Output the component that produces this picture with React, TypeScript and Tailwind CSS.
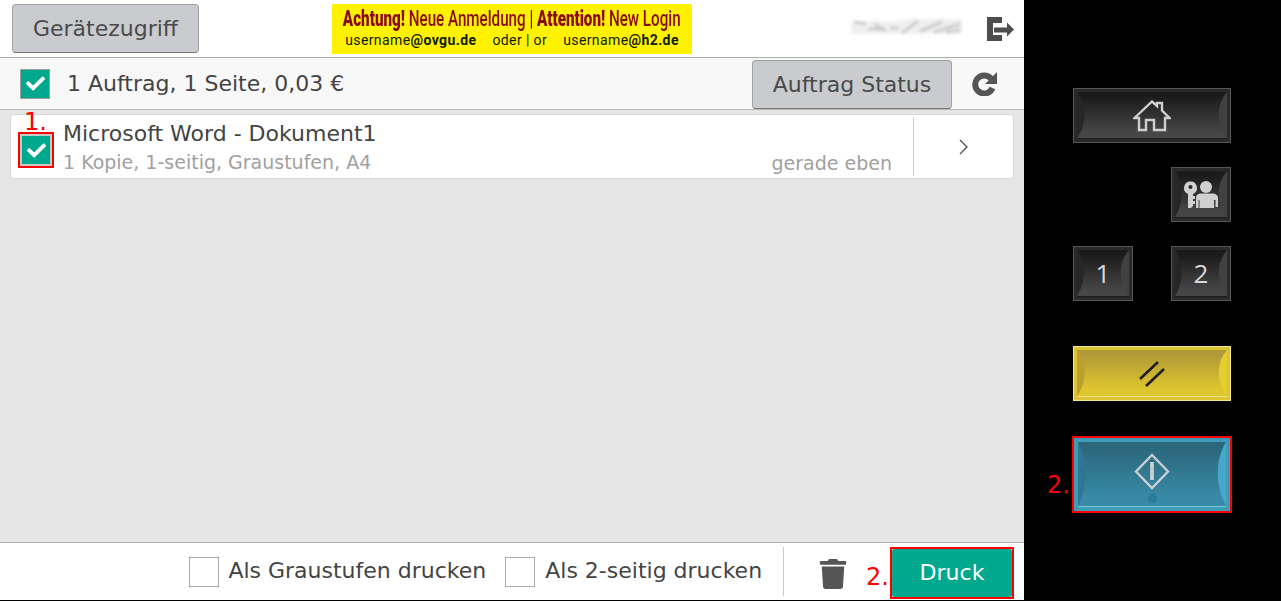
import React from "react";
import { FaCheck, FaTrash } from "react-icons/fa";

type KeyTheme = {
  border: string; bezel: string; top: string; bottom: string; left: string; right: string; lip: string;
};
const dark: KeyTheme = { border: "#575757", bezel: "#2a2a2a", top: "#1b1b1b", bottom: "#464646", left: "#262626", right: "#414141", lip: "#1e1e1e" };
const yellow: KeyTheme = { border: "#f4eb95", bezel: "#dcc433", top: "#b19a37", bottom: "#dfc62e", left: "#b99f30", right: "#e6cd30", lip: "#ece08a" };
const blue: KeyTheme = { border: "#3c9cb8", bezel: "#3f9db9", top: "#2b687d", bottom: "#398aa7", left: "#2f7790", right: "#46a8c8", lip: "#7cc3d2" };

function Key({ id, w, h, theme, className = "", children }: { id: string; w: number; h: number; theme: KeyTheme; className?: string; children?: React.ReactNode }) {
  return (
    <div className={`relative shrink-0 ${className}`} style={{ width: w, height: h }}>
      <svg width={w} height={h} viewBox={`0 0 ${w} ${h}`} className="absolute inset-0">
        <defs>
          <linearGradient id={id} x1="0" y1="0" x2="0" y2="1">
            <stop offset="0.1" stopColor={theme.top} />
            <stop offset="0.88" stopColor={theme.bottom} />
          </linearGradient>
        </defs>
        <rect x="0.5" y="0.5" width={w - 1} height={h - 1} fill={theme.bezel} stroke={theme.border} />
        <path d={`M4 4 H${w - 4} V${h - 5} H4 Z`} fill={`url(#${id})`} />
        <path d={`M4 4 C${w > 100 ? 14 : 13} ${h * 0.3} ${w > 100 ? 14 : 13} ${h * 0.65} 4 ${h - 5} Z`} fill={theme.left} />
        <path d={`M${w - 4} 4 C${w - 15} ${h * 0.3} ${w - 15} ${h * 0.65} ${w - 4} ${h - 5} Z`} fill={theme.right} />
        <path d={`M4 ${h - 4.5} H${w - 4}`} stroke={theme.lip} />
      </svg>
      <div className="absolute inset-0 flex items-center justify-center">{children}</div>
    </div>
  );
}

function Check({ className = "" }: { className?: string }) {
  return (
    <span className={`flex shrink-0 items-center justify-center border-[#9a9f9c] bg-[#00a88e] text-white ${className}`}>
      <FaCheck size={19} />
    </span>
  );
}

export default function App() {
  return (
    <div className="flex h-[601px] w-[1281px] overflow-hidden bg-black font-['DejaVu_Sans',sans-serif] text-[#444]">
      <main className="flex h-[600px] w-[1024px] shrink-0 flex-col bg-white">
        <header className="flex h-[58px] shrink-0 items-start border-b border-[#aab2a8] bg-white">
          <button className="ml-3 mt-1 h-[49px] w-[187px] rounded border border-[#a0a2a4] border-b-[#777] bg-[#c9cbce] text-[22px] text-[#4a4a4a]">
            Gerätezugriff
          </button>
          <div className="ml-[133px] mt-1 flex h-[50px] w-[360px] flex-col items-center overflow-hidden bg-[#fff200] font-['Roboto',sans-serif]">
            <div className="h-[27px] origin-center scale-x-[0.69] whitespace-nowrap text-[22px] font-medium leading-[29px] text-[#8b0a1e]">
              <b className="font-black">Achtung!</b> Neue Anmeldung | <b className="font-black">Attention!</b> New Login
            </div>
            <div className="flex gap-4 whitespace-nowrap text-[14px] leading-[18px] tracking-[0.4px] text-[#10200a]">
              <span>username<b>@ovgu.de</b></span>
              <span>oder | or</span>
              <span>username<b>@h2.de</b></span>
            </div>
          </div>
          <svg width="114" height="22" viewBox="0 0 114 22" className="ml-[158px] mt-4 blur-[1.5px]">
            <path d="M1 5 H48 L58 3 H112 V18 H1 Z" fill="#efefef" />
            <path d="M4 6 L16 8 M18 13 H34 M24 8 L36 15 M40 12 H48 M52 17 L68 5 M70 15 L92 6 M84 16 L110 8 M96 16 L110 14" stroke="#c6c6c6" strokeWidth="2.5" fill="none" />
          </svg>
          <svg width="27" height="24" viewBox="0 0 27 24" className="ml-[23px] mt-[17px]" fill="#4d4d4d">
            <path d="M0 0 H15 V6 H6 V18 H15 V24 H0 Z" />
            <path d="M7 10.5 H20 V5.5 L27 12.5 L20 19.5 V15.5 H7 Z" />
          </svg>
        </header>

        <section className="flex h-[52px] shrink-0 items-center border-b border-[#b4bab2] bg-[#f8f8f8]">
          <Check className="ml-5 h-[30px] w-[30px] border" />
          <span className="ml-[17px] whitespace-nowrap text-[22px]">1 Auftrag, 1 Seite, 0,03 €</span>
          <button className="ml-auto mt-[2px] h-[49px] w-[200px] rounded border border-[#a0a2a4] border-b-[#777] bg-[#c9cbce] text-[22px] text-[#4a4a4a]">
            Auftrag Status
          </button>
          <svg width="25" height="24" viewBox="0 0 25 24" className="ml-5 mr-[27px]" fill="none">
            <path d="M19 6.5 A9 9 0 1 0 20.5 16" stroke="#555" strokeWidth="6" />
            <path d="M25 0 V12 H13 Z" fill="#555" />
          </svg>
        </section>

        <section className="min-h-0 flex-1 bg-[#e6e6e6] px-2.5 pt-1">
          <article className="relative flex h-[65px] items-stretch rounded-[3px] border border-[#d8d8d8] bg-white">
            <div className="ml-[7px] mt-[17px] h-[36px] w-[36px] shrink-0 border-2 border-[#ff0000]">
              <Check className="h-[32px] w-[32px] border-2 !border-[#c4cac7]" />
            </div>
            <span className="absolute left-[13px] top-[-8px] text-[24px] leading-[30px] text-[#ff0000]">1.</span>
            <div className="ml-[9px] flex min-w-0 flex-1 flex-col">
              <span className="mt-[4px] whitespace-nowrap text-[22px] leading-[30px]">Microsoft Word - Dokument1</span>
              <span className="whitespace-nowrap text-[19px] leading-[26px] text-[#a0a0a0]">1 Kopie, 1-seitig, Graustufen, A4</span>
            </div>
            <span className="mb-[2px] mr-[21px] self-end whitespace-nowrap text-[19px] leading-[26px] text-[#a0a0a0]">gerade eben</span>
            <div className="my-0.5 flex w-[100px] items-center justify-center border-l border-[#cfcfcf]">
              <svg width="12" height="16" viewBox="0 0 12 16" fill="none" stroke="#555" strokeWidth="1.4">
                <path d="M2 1 L9 8 L2 15" />
              </svg>
            </div>
          </article>
        </section>

        <footer className="flex h-[58px] shrink-0 items-center justify-end border-t border-[#b0b0b0] bg-white pr-2.5">
          <span className="mr-[9px] h-[30px] w-[30px] border border-[#aaa]" />
          <span className="mb-[2px] mr-[19px] whitespace-nowrap text-[22px]">Als Graustufen drucken</span>
          <span className="mr-2.5 h-[30px] w-[30px] border border-[#aaa]" />
          <span className="mb-[2px] whitespace-nowrap text-[22px]">Als 2-seitig drucken</span>
          <span className="ml-[21px] h-[49px] border-l border-[#ccc]" />
          <FaTrash size={30} className="ml-[34px] mt-[4px] text-[#555]" />
          <span className="ml-[18px] mt-[10px] text-[24px] text-[#ff0000]">2.</span>
          <div className="ml-[1px] mt-[4px] h-[52px] w-[124px] self-start border-2 border-[#ff0000]">
            <button className="h-full w-full rounded-[2px] bg-[#00a88e] pb-[2px] text-[22px] text-white">Druck</button>
          </div>
        </footer>
      </main>

      <aside className="flex w-[257px] flex-col items-end pr-[50px] pt-[88px]">
        <Key id="home" w={158} h={55} theme={dark}>
          <svg width="38" height="32" viewBox="0 0 38 32" fill="none" stroke="#cfcfcf" strokeWidth="2.4">
            <path d="M1.5 18 L19 1.5 L24 6 V3 H29 V10.5 L36.5 18 H32 V30 H21 V20 H13 V30 H6 V18 Z" />
          </svg>
        </Key>
        <Key id="auth" w={60} h={55} theme={dark} className="mt-6">
          <svg width="36" height="27" viewBox="0 0 36 27" fill="#d0d0d0">
            <path fillRule="evenodd" d="M7.5 0.5 A6.5 6.5 0 0 1 10 13 V15 H12 V18 H10 V20 H12 V23 H10 V25 L8 27 H5 V13 A6.5 6.5 0 0 1 7.5 0.5 Z M7.5 4 A2 2 0 1 0 7.51 4 Z" />
            <circle cx="23" cy="6" r="6" />
            <path d="M13 27 V17 Q13 12.5 18 12.5 H29 Q35 12.5 35 17 V26 H32.5 V19 H31 V27 H16.5 V19 H15.5 V27 Z" />
          </svg>
        </Key>
        <div className="mt-6 flex w-[158px] justify-between">
          <Key id="one" w={60} h={55} theme={dark}>
            <span className="font-['Open_Sans',sans-serif] text-[26px] text-[#d8d8d8]">1</span>
          </Key>
          <Key id="two" w={60} h={55} theme={dark}>
            <span className="font-['Open_Sans',sans-serif] text-[26px] text-[#d8d8d8]">2</span>
          </Key>
        </div>
        <Key id="reset" w={158} h={55} theme={yellow} className="mt-[45px]">
          <svg width="26" height="26" viewBox="0 0 26 26" stroke="#1f1f1f" strokeWidth="2.6">
            <path d="M1 18 L19 1 M7 25 L25 8" />
          </svg>
        </Key>
        <div className="relative mr-px mt-[37px]">
          <span className="absolute right-[160px] top-[32px] text-[24px] leading-[30px] text-[#ff0000]">2.</span>
          <div className="outline-2 outline-[#ff0000]">
            <Key id="start" w={156} h={73} theme={blue}>
              <div className="flex flex-col items-center pt-[6px]">
                <svg width="36" height="37" viewBox="0 0 36 37" fill="none" stroke="#c9ced0" strokeWidth="2.4">
                  <path d="M18 2 L34 18.5 L18 35 L2 18.5 Z" />
                  <path d="M18 9 V27" strokeWidth="3.8" />
                </svg>
                <span className="mt-[4px] h-[9px] w-[9px] rounded-full bg-[#2a7c9c]" />
              </div>
            </Key>
          </div>
        </div>
      </aside>
    </div>
  );
}
